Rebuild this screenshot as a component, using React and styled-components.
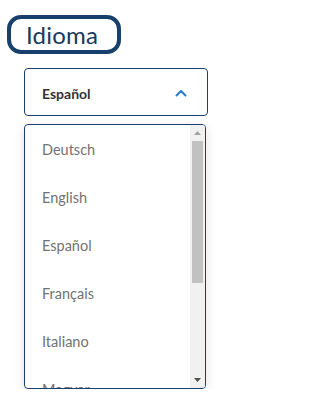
import styled, { createGlobalStyle } from 'styled-components';

const LANGUAGES = [
  "Deutsch",
  "English",
  "Español",
  "Français",
  "Italiano",
  "Magyar",
  "Nederlands",
  "Polski",
  "Português"
];

const GlobalStyle = createGlobalStyle`
  html, body {
    margin: 0;
    padding: 0;
    background: #ffffff;
  }
  body {
    font-family: Lato, "Noto Sans", sans-serif;
  }
`

export default function App() {
  return (
    <>
      <GlobalStyle />
      <Page>
        <TitleBox>Idioma</TitleBox>
        <Field>
          <SelectButton>
            <span>Español</span>
            <svg width="12" height="8" viewBox="0 0 12 8" fill="none">
              <path d="M1.5 6.5L6 2L10.5 6.5" stroke="#2a7cc8" strokeWidth="2" strokeLinecap="round" strokeLinejoin="round" />
            </svg>
          </SelectButton>
          <OptionList>
            <Options>
              {LANGUAGES.map((lang) => (
                <Option key={lang}>{lang}</Option>
              ))}
            </Options>
            <Scrollbar>
              <ArrowButton>
                <svg width="7" height="4" viewBox="0 0 7 4">
                  <path d="M0 4L3.5 0L7 4Z" fill="#a3a3a3" />
                </svg>
              </ArrowButton>
              <Thumb />
              <Track />
              <ArrowButton>
                <svg width="7" height="4" viewBox="0 0 7 4">
                  <path d="M0 0L3.5 4L7 0Z" fill="#505050" />
                </svg>
              </ArrowButton>
            </Scrollbar>
          </OptionList>
        </Field>
      </Page>
    </>
  );
}

const Page = styled.div`
  display: flex;
  flex-direction: column;
  padding: 15px 0 0 7px;
`

const TitleBox = styled.div`
  align-self: flex-start;
  box-sizing: border-box;
  height: 39px;
  width: 114px;
  padding: 0 0 0 15px;
  display: flex;
  align-items: center;
  border: 4px solid #17416c;
  border-radius: 14px;
  font-size: 24px;
  color: #183a5e;
  letter-spacing: 0.2px;
`

const Field = styled.div`
  display: flex;
  flex-direction: column;
  gap: 8px;
  margin: 14px 0 0 17px;
  width: 184px;
`

const SelectButton = styled.div`
  box-sizing: border-box;
  height: 48px;
  display: flex;
  align-items: center;
  justify-content: space-between;
  padding: 2px 20px 0 17px;
  border: 1px solid #17416c;
  border-radius: 4px;
  font-size: 14px;
  font-weight: 700;
  color: #333333;
`

const OptionList = styled.div`
  box-sizing: border-box;
  width: 182px;
  height: 265px;
  display: flex;
  overflow: hidden;
  border: 1px solid #17416c;
  border-radius: 4px;
  background: #ffffff;
  box-shadow: 0 3px 12px rgba(0, 0, 0, 0.12);
`

const Options = styled.div`
  flex: 1;
  overflow: hidden;
`

const Option = styled.div`
  height: 48px;
  display: flex;
  align-items: center;
  padding: 1px 0 0 17px;
  box-sizing: border-box;
  font-size: 14.5px;
  color: #727272;
`

const Scrollbar = styled.div`
  width: 15px;
  flex-shrink: 0;
  display: flex;
  flex-direction: column;
  background: #f1f1f1;
`

const ArrowButton = styled.div`
  height: 16px;
  flex-shrink: 0;
  display: flex;
  align-items: center;
  justify-content: center;

  svg {
    display: block;
  }
`

const Thumb = styled.div`
  height: 142px;
  flex-shrink: 0;
  margin: 0 2px;
  background: #c1c1c1;
`

const Track = styled.div`
  flex: 1;
`
